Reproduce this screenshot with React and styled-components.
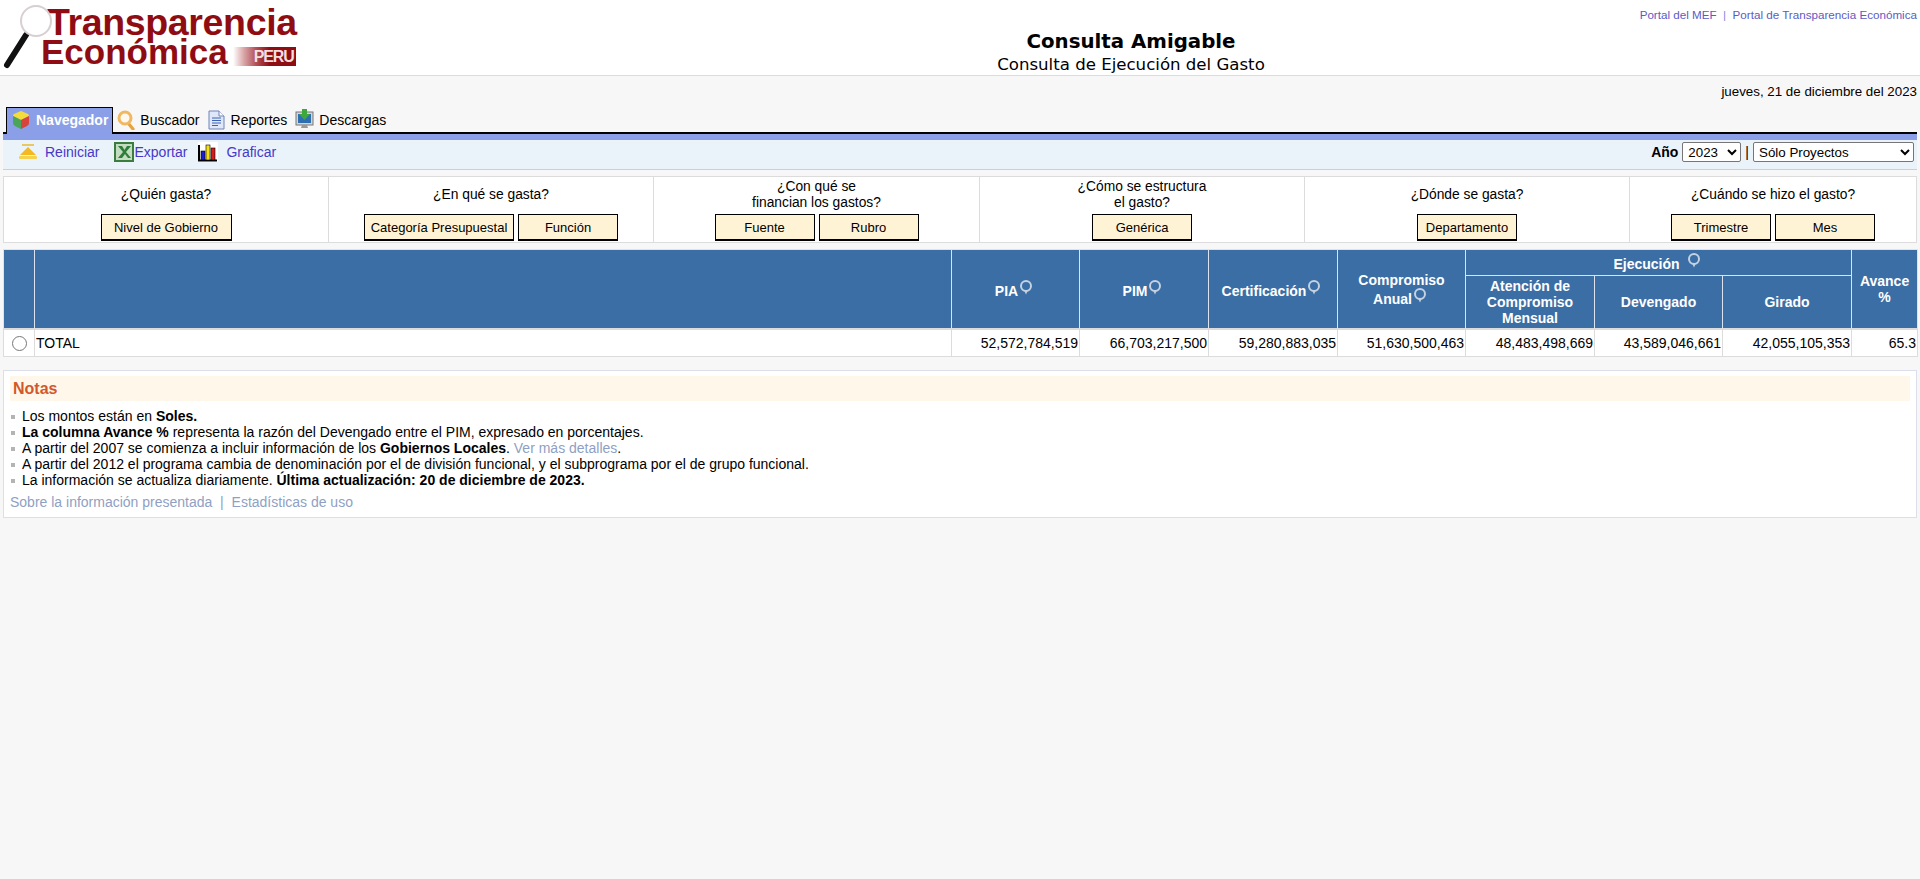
import React from "react";
import styled, { createGlobalStyle } from "styled-components";

const GlobalStyle = createGlobalStyle`
    html, body {
        margin: 0;
        padding: 0;
        background: #f7f7f7;
        color: #000;
        font-family: "Liberation Sans", Arial, sans-serif;
        font-size: 12px;
    }
    body {
        min-height: 879px;
    }
    a {
        text-decoration: none;
    }
`;

const Header = styled.header`
    display: grid;
    grid-template-columns: 342px 1fr;
    height: 75px;
    background: #fff;
    border-bottom: 1px solid #dcdcdc;
`;

const Logo = styled.div`
    position: relative;
    height: 75px;
    color: #8f0d12;
    font-weight: bold;
`;

const LogoGlass = styled.svg`
    position: absolute;
    left: 3px;
    top: 4px;
    z-index: 1;
`;

const LogoTop = styled.div`
    padding: 3px 0 0 47px;
    font-size: 37.5px;
    line-height: 39px;
    white-space: nowrap;
    letter-spacing: -0.35px;
`;

const LogoBottom = styled.div`
    display: flex;
    align-items: flex-end;
    gap: 5px;
    margin-top: -8px;
    padding-left: 41px;
    font-size: 35px;
    line-height: 36px;
    white-space: nowrap;
`;

const LogoPeru = styled.span`
    width: 63px;
    height: 19px;
    margin-bottom: 4px;
    padding-right: 2px;
    box-sizing: border-box;
    background: linear-gradient(90deg, #fff 0%, #d8a2a4 18%, #b45358 36%, #8f0d12 58%);
    color: #f1dfe0;
    font-size: 16px;
    line-height: 20px;
    text-align: right;
    letter-spacing: -1.1px;
`;

const TitleBlock = styled.div`
    display: flex;
    flex-direction: column;
    text-align: center;
`;

const TopLinks = styled.div`
    height: 30px;
    padding: 8px 3px 0 0;
    box-sizing: border-box;
    text-align: right;
    color: #8a8ae0;
    font-size: 11.65px;
    line-height: 14px;
`;

const TopLink = styled.a`
    color: #5b5bc5;
`;

const Title = styled.div`
    font-family: "DejaVu Sans", Verdana, sans-serif;
    font-size: 19.8px;
    font-weight: bold;
    line-height: 24px;
`;

const Subtitle = styled.div`
    font-family: "DejaVu Sans", Verdana, sans-serif;
    font-size: 16.6px;
    line-height: 21px;
`;

const Main = styled.main`
    padding: 0 3px;
`;

const DateRow = styled.div`
    height: 31px;
    font-size: 13.33px;
    line-height: 31px;
    text-align: right;
`;

const Tabs = styled.nav`
    display: flex;
    align-items: flex-end;
    height: 25px;
    padding-left: 3px;
    border-bottom: 2px solid #000;
`;

const Tab = styled.a`
    display: flex;
    align-items: center;
    gap: ${(p) => (p.$active ? "6px" : "5px")};
    height: ${(p) => (p.$active ? "24px" : "23px")};
    padding: ${(p) => (p.$active ? "0 4px 2px 5px" : "0 4px 1px 4px")};
    margin-bottom: ${(p) => (p.$active ? "-2px" : "0")};
    border: ${(p) => (p.$active ? "1px solid #000" : "0")};
    border-width: ${(p) => (p.$active ? "1px 1px 0 1px" : "0")};
    background: ${(p) => (p.$active ? "#8a9fe8" : "transparent")};
    color: ${(p) => (p.$active ? "#fff" : "#000")};
    font-size: 14px;
    font-weight: ${(p) => (p.$active ? "bold" : "normal")};
`;

const Toolbar = styled.div`
    display: flex;
    justify-content: space-between;
    align-items: center;
    height: 36px;
    box-sizing: border-box;
    padding: 0 3px 5px 15px;
    border-top: 6px solid #8a9fe8;
    border-bottom: 1px solid #cfcfcf;
    background: #eaf2fa;
`;

const ToolGroup = styled.div`
    display: flex;
    align-items: center;
`;

const ToolLink = styled.a`
    display: flex;
    align-items: center;
    gap: ${(p) => p.$gap};
    margin-right: ${(p) => p.$after};
    color: #4638c8;
    font-size: 14px;
`;

const YearLabel = styled.label`
    font-size: 14px;
    font-weight: bold;
    margin-right: 4px;
`;

const Divider = styled.span`
    margin: 0 4px;
    font-size: 14px;
`;

const Select = styled.select`
    width: ${(p) => p.$width};
    height: 20px;
    padding: 0 0 0 1px;
    border: 1px solid #767676;
    border-radius: 2px;
    background: #fff;
    color: #000;
    font-family: "Liberation Sans", Arial, sans-serif;
    font-size: 13.33px;
`;

const Questions = styled.section`
    display: grid;
    grid-template-columns: 324px 325px 326px 325px 325px 1fr;
    height: 67px;
    margin-top: 6px;
    box-sizing: border-box;
    border: 1px solid #dcdcdc;
    background: #fff;
`;

const Question = styled.div`
    display: flex;
    flex-direction: column;
    align-items: center;
    justify-content: flex-end;
    padding-bottom: 1px;
    border-left: ${(p) => (p.$first ? "0" : "1px solid #dcdcdc")};
`;

const QuestionText = styled.div`
    display: flex;
    align-items: center;
    justify-content: center;
    height: 36px;
    padding-bottom: 2px;
    box-sizing: border-box;
    font-size: 13.8px;
    line-height: 16px;
    text-align: center;
`;

const QuestionButtons = styled.div`
    display: flex;
    gap: 4px;
`;

const DimButton = styled.button`
    width: ${(p) => p.$width || "100px"};
    height: 27px;
    padding: 0;
    box-sizing: border-box;
    border: 1px solid #000;
    border-bottom-width: 2px;
    background: #fff3d6;
    color: #000;
    font-family: "Liberation Sans", Arial, sans-serif;
    font-size: 13px;
`;

const DataTable = styled.table`
    width: 1914px;
    margin-top: 6px;
    table-layout: fixed;
    border-collapse: collapse;
    background: #fff;
`;

const Th = styled.th`
    padding: 0 2px;
    border: 1px solid #dce3ee;
    background: #3b6ea5;
    color: #fff;
    font-size: 14px;
    line-height: 16px;
    font-weight: bold;
    text-align: center;
    height: ${(p) => p.$height || "auto"};
`;

const Td = styled.td`
    height: 26px;
    padding: 0 1px;
    border: 1px solid #dcdcdc;
    border-top: 2px solid #dcdcdc;
    font-size: 14px;
    text-align: ${(p) => p.$align || "right"};
`;

const Radio = styled.input`
    display: block;
    width: 15px;
    height: 15px;
    margin: 0 auto;
`;

const Notes = styled.section`
    height: 148px;
    margin-top: 13px;
    padding: 5px 6px 0 6px;
    box-sizing: border-box;
    border: 1px solid #dcdeea;
    background: #fff;
`;

const NotesTitle = styled.h3`
    height: 25px;
    margin: 0;
    padding-left: 3px;
    background: #fff8ea;
    color: #d2582a;
    font-size: 16px;
    line-height: 25px;
`;

const NotesList = styled.ul`
    margin: 7px 0 0;
    padding: 0 0 0 1px;
    list-style: none;
    font-size: 14px;
    line-height: 16px;
    li::before {
        content: "";
        display: inline-block;
        width: 4px;
        height: 4px;
        margin-right: 7px;
        vertical-align: 2px;
        background: #b4b4b4;
    }
`;

const NoteLink = styled.a`
    color: #8f9fc4;
`;

const NotesFooter = styled.div`
    margin-top: 6px;
    font-size: 14px;
    line-height: 16px;
    color: #8f9fc4;
`;

const Cube = () => (
    <svg width="18" height="20" viewBox="0 0 18 20">
        <path d="M9 1 L16 4 Q17 4.500 17 6 L9 10 L1 6 Q1 4.500 2 4 Z" fill="#f4dc3c" />
        <path d="M1 6 L9 10 V19 L3 16 Q1 15 1 13 Z" fill="#4aa45a" />
        <path d="M17 6 L9 10 V19 L15 16 Q17 15 17 13 Z" fill="#d8433c" />
    </svg>
);

const SearchIcon = () => (
    <svg width="18" height="20" viewBox="0 0 18 20">
        <path d="M11 13 L16 19" stroke="#e8a33c" strokeWidth="3.2" strokeLinecap="round" />
        <circle cx="8" cy="8" r="6" fill="#fff8ee" stroke="#f0b860" strokeWidth="3" />
    </svg>
);

const DocIcon = () => (
    <svg width="18" height="20" viewBox="0 0 18 20">
        <path d="M1 1 H11 L16 6 V19 H1 Z" fill="#dfe7fa" stroke="#6f83b8" />
        <path d="M11 1 V6 H16" fill="#fff" stroke="#6f83b8" />
        <path d="M4 8 H13 M4 10.500 H13 M4 13 H13 M4 15.500 H10" stroke="#3c62b4" />
    </svg>
);

const MonitorIcon = () => (
    <svg width="19" height="21" viewBox="0 0 19 21">
        <rect x="1" y="3" width="17" height="13" fill="#d6d6d6" stroke="#777" />
        <rect x="3" y="5" width="13" height="9" fill="#2d6fb0" />
        <path d="M7 0 H12 V5 H15 L9.500 11 L4 5 H7 Z" fill="#3ea83e" />
        <path d="M6 19 H13 L12 16 H7 Z" fill="#999" />
    </svg>
);

const ResetIcon = () => (
    <svg width="20" height="18" viewBox="0 0 20 18">
        <rect x="4" y="1" width="12" height="2" fill="#e8c860" />
        <path d="M10 4 L18 12 H2 Z" fill="#f4b820" />
        <rect x="1" y="13" width="18" height="3" rx="1" fill="#f6d24c" />
    </svg>
);

const ExcelIcon = () => (
    <svg width="20" height="20" viewBox="0 0 20 20">
        <rect width="20" height="20" fill="#3a7d3e" />
        <rect x="2" y="2" width="16" height="16" fill="#c4dcc0" />
        <path d="M4 4 L9 10 L4 16 H8 L11 12 L14 16 H17 L12 10 L17 4 H13 L10.500 8 L8 4 Z" fill="#2f7d3a" />
    </svg>
);

const ChartIcon = () => (
    <svg width="20" height="20" viewBox="0 0 20 20">
        <rect width="20" height="20" fill="#fff" />
        <path d="M1 3 V18.500 H19" fill="none" stroke="#000" strokeWidth="2" />
        <rect x="3" y="9" width="4" height="9" fill="#1c1cd0" stroke="#000" strokeWidth="0.6" />
        <rect x="8" y="3" width="4" height="15" fill="#f4e014" stroke="#000" strokeWidth="0.6" />
        <rect x="13" y="6" width="4" height="12" fill="#d81c1c" stroke="#000" strokeWidth="0.6" />
    </svg>
);

const HintBalloon = styled.svg`
    vertical-align: 1px;
    margin-left: ${(p) => p.$gap || "0"};
    margin-right: 2px;
`;

const Hint = ({ gap }) => (
    <HintBalloon $gap={gap} width="16" height="15" viewBox="0 0 16 15">
        <circle cx="8" cy="6" r="5" fill="none" stroke="#c4d2e2" strokeWidth="2" />
        <path d="M6 10 L8 14.500 L10 10 Z" fill="#c4d2e2" />
    </HintBalloon>
);

const amounts = [
    "52,572,784,519",
    "66,703,217,500",
    "59,280,883,035",
    "51,630,500,463",
    "48,483,498,669",
    "43,589,046,661",
    "42,055,105,353",
    "65.3",
];

const questions = [
    { text: "¿Quién gasta?", buttons: [{ label: "Nivel de Gobierno", width: "131px" }] },
    {
        text: "¿En qué se gasta?",
        buttons: [{ label: "Categoría Presupuestal", width: "150px" }, { label: "Función" }],
    },
    {
        text: (
            <>
                ¿Con qué se
                <br />
                financian los gastos?
            </>
        ),
        buttons: [{ label: "Fuente" }, { label: "Rubro" }],
    },
    {
        text: (
            <>
                ¿Cómo se estructura
                <br />
                el gasto?
            </>
        ),
        buttons: [{ label: "Genérica" }],
    },
    { text: "¿Dónde se gasta?", buttons: [{ label: "Departamento" }] },
    { text: "¿Cuándo se hizo el gasto?", buttons: [{ label: "Trimestre" }, { label: "Mes" }] },
];

const App = () => {
    return (
        <>
            <GlobalStyle />
            <Header>
                <Logo>
                    <LogoGlass width="52" height="66" viewBox="0 0 52 66">
                        <path d="M23 31 L4 61" stroke="#111" strokeWidth="6" strokeLinecap="round" />
                        <circle cx="33" cy="17" r="15" fill="#fff" fillOpacity="0.75" stroke="#d8cfd0" strokeWidth="2" />
                    </LogoGlass>
                    <LogoTop>Transparencia</LogoTop>
                    <LogoBottom>
                        Económica
                        <LogoPeru>PERU</LogoPeru>
                    </LogoBottom>
                </Logo>
                <TitleBlock>
                    <TopLinks>
                        <TopLink href="#">Portal del MEF</TopLink>
                        &nbsp; | &nbsp;
                        <TopLink href="#">Portal de Transparencia Económica</TopLink>
                    </TopLinks>
                    <Title>Consulta Amigable</Title>
                    <Subtitle>Consulta de Ejecución del Gasto</Subtitle>
                </TitleBlock>
            </Header>
            <Main>
                <DateRow>jueves, 21 de diciembre del 2023</DateRow>
                <Tabs>
                    <Tab $active href="#">
                        <Cube />
                        Navegador
                    </Tab>
                    <Tab href="#">
                        <SearchIcon />
                        Buscador
                    </Tab>
                    <Tab href="#">
                        <DocIcon />
                        Reportes
                    </Tab>
                    <Tab href="#">
                        <MonitorIcon />
                        Descargas
                    </Tab>
                </Tabs>
                <Toolbar>
                    <ToolGroup>
                        <ToolLink href="#" $gap="7px" $after="15px">
                            <ResetIcon />
                            Reiniciar
                        </ToolLink>
                        <ToolLink href="#" $gap="0" $after="11px">
                            <ExcelIcon />
                            Exportar
                        </ToolLink>
                        <ToolLink href="#" $gap="8px" $after="0">
                            <ChartIcon />
                            Graficar
                        </ToolLink>
                    </ToolGroup>
                    <ToolGroup>
                        <YearLabel>Año</YearLabel>
                        <Select $width="59px" defaultValue="2023">
                            <option>2023</option>
                        </Select>
                        <Divider>|</Divider>
                        <Select $width="161px" defaultValue="Sólo Proyectos">
                            <option>Sólo Proyectos</option>
                        </Select>
                    </ToolGroup>
                </Toolbar>
                <Questions>
                    {questions.map((q, i) => (
                        <Question key={i} $first={i === 0}>
                            <QuestionText>{q.text}</QuestionText>
                            <QuestionButtons>
                                {q.buttons.map((b) => (
                                    <DimButton key={b.label} $width={b.width}>
                                        {b.label}
                                    </DimButton>
                                ))}
                            </QuestionButtons>
                        </Question>
                    ))}
                </Questions>
                <DataTable>
                    <colgroup>
                        <col width="31" />
                        <col width="917" />
                        <col width="128" />
                        <col width="129" />
                        <col width="129" />
                        <col width="128" />
                        <col width="129" />
                        <col width="128" />
                        <col width="129" />
                        <col width="66" />
                    </colgroup>
                    <thead>
                        <tr>
                            <Th rowSpan={2} />
                            <Th rowSpan={2} />
                            <Th rowSpan={2}>
                                PIA
                                <Hint />
                            </Th>
                            <Th rowSpan={2}>
                                PIM
                                <Hint />
                            </Th>
                            <Th rowSpan={2}>
                                Certificación
                                <Hint />
                            </Th>
                            <Th rowSpan={2}>
                                Compromiso
                                <br />
                                Anual
                                <Hint />
                            </Th>
                            <Th colSpan={3} $height="25px">
                                Ejecución
                                <Hint gap="6px" />
                            </Th>
                            <Th rowSpan={2}>
                                Avance
                                <br />%
                            </Th>
                        </tr>
                        <tr>
                            <Th $height="52px">
                                Atención de
                                <br />
                                Compromiso
                                <br />
                                Mensual
                            </Th>
                            <Th>Devengado</Th>
                            <Th>Girado</Th>
                        </tr>
                    </thead>
                    <tbody>
                        <tr>
                            <Td $align="center">
                                <Radio type="radio" name="row" />
                            </Td>
                            <Td $align="left">TOTAL</Td>
                            {amounts.map((a) => (
                                <Td key={a}>{a}</Td>
                            ))}
                        </tr>
                    </tbody>
                </DataTable>
                <Notes>
                    <NotesTitle>Notas</NotesTitle>
                    <NotesList>
                        <li>
                            Los montos están en <b>Soles.</b>
                        </li>
                        <li>
                            <b>La columna Avance %</b> representa la razón del Devengado entre el PIM, expresado en
                            porcentajes.
                        </li>
                        <li>
                            A partir del 2007 se comienza a incluir información de los <b>Gobiernos Locales</b>.{" "}
                            <NoteLink href="#">Ver más detalles</NoteLink>.
                        </li>
                        <li>
                            A partir del 2012 el programa cambia de denominación por el de división funcional, y el
                            subprograma por el de grupo funcional.
                        </li>
                        <li>
                            La información se actualiza diariamente. <b>Última actualización: 20 de diciembre de 2023.</b>
                        </li>
                    </NotesList>
                    <NotesFooter>
                        <NoteLink href="#">Sobre la información presentada</NoteLink>
                        &nbsp; | &nbsp;
                        <NoteLink href="#">Estadísticas de uso</NoteLink>
                    </NotesFooter>
                </Notes>
            </Main>
        </>
    );
};

export default App;
